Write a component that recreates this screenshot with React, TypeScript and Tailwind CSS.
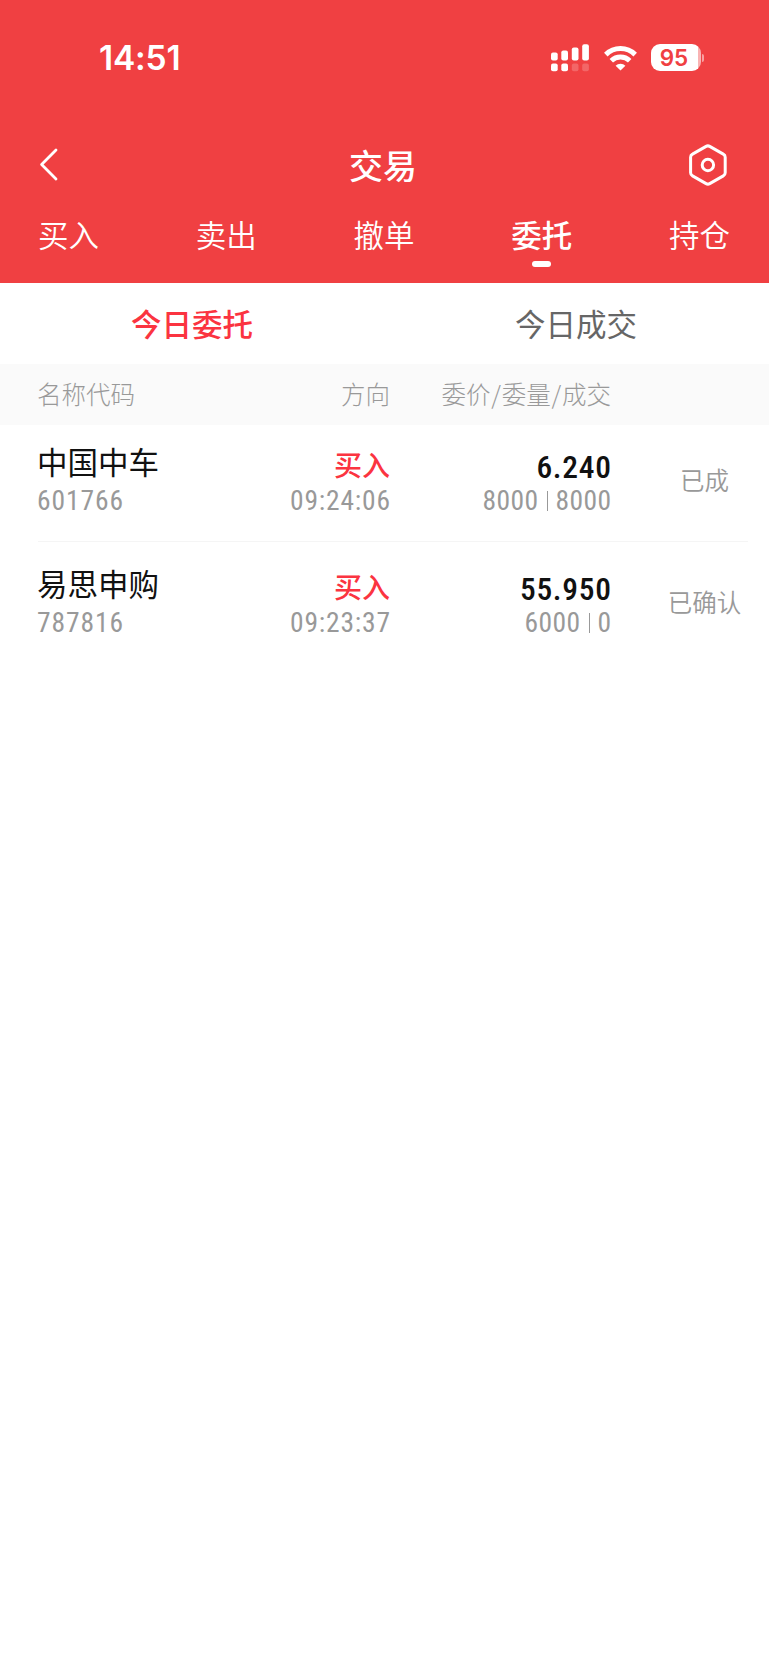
import { clsx } from 'clsx';

interface Order {
  name: string;
  code: string;
  side: string;
  time: string;
  price: string;
  amount: string;
  filled: string;
  status: string;
}

const TABS = ['买入', '卖出', '撤单', '委托', '持仓'];
const ACTIVE_TAB = '委托';

const ORDERS: Order[] = [
  {
    name: '中国中车',
    code: '601766',
    side: '买入',
    time: '09:24:06',
    price: '6.240',
    amount: '8000',
    filled: '8000',
    status: '已成',
  },
  {
    name: '易思申购',
    code: '787816',
    side: '买入',
    time: '09:23:37',
    price: '55.950',
    amount: '6000',
    filled: '0',
    status: '已确认',
  },
];

const COLUMNS = 'grid grid-cols-[175px_178px_221px_1fr] pl-[37px]';
const DIGITS =
  "font-['Roboto','Noto_Sans_CJK_SC',sans-serif] [font-stretch:87%]";

const StatusBar = () => (
  <div className="flex h-[115px] items-center justify-between pl-[99px] pr-[65px]">
    <span className="pt-[2px] font-['Inter',sans-serif] text-[33.5px] font-semibold leading-none tracking-[-0.2px] text-white">
      14:51
    </span>
    <div className="flex items-center">
      {/* Dual SIM signal */}
      <svg className="h-7 w-[38px]" viewBox="0 0 38 28" fill="#fff">
        <rect x="0" y="8.5" width="6.7" height="8" rx="2" />
        <rect x="10.3" y="6.5" width="6.7" height="10" rx="2" />
        <rect x="20.8" y="3.5" width="6.7" height="13" rx="2" />
        <rect x="31.2" y="0.3" width="6.7" height="16.2" rx="2" />
        <rect x="0" y="19.5" width="6.7" height="7.8" rx="2" />
        <rect x="10.3" y="19.5" width="6.7" height="7.8" rx="2" />
        <rect x="20.8" y="19.5" width="6.7" height="7.8" rx="2" opacity="0.2" />
        <rect x="31.2" y="19.5" width="6.7" height="7.8" rx="2" opacity="0.2" />
      </svg>
      {/* Wifi */}
      <svg
        className="ml-[15px] h-[26px] w-[33px]"
        viewBox="0 0 33 26"
        fill="none"
        stroke="#fff"
        strokeWidth="5"
      >
        <path d="M1.8 9.6a21 21 0 0 1 29.4 0" />
        <path d="M7.3 15.8a13.3 13.3 0 0 1 18.4 0" />
        <path
          d="M16.5 25.6l-4.9-4.900a6.900 6.900 0 0 1 9.800 0z"
          fill="#fff"
          stroke="none"
        />
      </svg>
      {/* Battery */}
      <div className="ml-[14px] flex h-[27px] w-[50px] items-center justify-center rounded-[9px] bg-[linear-gradient(to_right,#fff_47px,#f9b3b3_47px)] pr-[3px] pt-[1px]">
        <span className="font-['Inter',sans-serif] text-[22.5px] font-semibold leading-none text-[#f04042]">
          95
        </span>
      </div>
      <div className="ml-[1px] h-[8px] w-[2.5px] rounded-r-full bg-white/50" />
    </div>
  </div>
);

const Header = () => (
  <header className="h-[283px] bg-[#f04042] text-white">
    <StatusBar />
    <div className="flex h-[98px] items-center justify-between pl-[39px] pr-[42px]">
      <svg
        className="h-[34px] w-[38px]"
        viewBox="0 0 38 34"
        fill="none"
        stroke="#fff"
        strokeWidth="2.8"
        strokeLinecap="round"
        strokeLinejoin="round"
      >
        <path d="M17 3 2.6 17.5 17 32" />
      </svg>
      <h1 className="pt-[1px] text-[34px] font-medium leading-none">交易</h1>
      <svg
        className="mt-[2px] h-[42px] w-[38px]"
        viewBox="0 0 38 42"
        fill="none"
        stroke="#fff"
        strokeWidth="3"
        strokeLinejoin="round"
      >
        <path d="M16.2 2.4a3.6 3.6 0 0 1 3.6 0l13.600 7.700a3.600 3.600 0 0 1 1.900 3.200v15.400a3.600 3.600 0 0 1-1.900 3.200l-13.600 7.700a3.600 3.600 0 0 1-3.600 0L2.600 31.900a3.600 3.600 0 0 1-1.900-3.200V13.300a3.600 3.600 0 0 1 1.900-3.200z" transform="translate(.9 0)" />
        <circle cx="18.9" cy="21" r="5.700" />
      </svg>
    </div>
    <nav className="flex justify-between pl-[38px] pr-[39px]">
      {TABS.map((tab) => (
        <div key={tab} className="flex flex-col items-center">
          <span
            className={clsx(
              'text-[30.5px] leading-[42px]',
              tab === ACTIVE_TAB ? 'font-medium' : 'font-[350]',
            )}
          >
            {tab}
          </span>
          {tab === ACTIVE_TAB && (
            <span className="mt-1.5 h-1.5 w-[19px] rounded-[3px] bg-white" />
          )}
        </div>
      ))}
    </nav>
  </header>
);

const OrderRow = ({ order }: { order: Order }) => (
  <div className={clsx(COLUMNS, 'pt-[15px]')}>
    <div>
      <div className="text-[30.5px] leading-[42px] text-[#111]">
        {order.name}
      </div>
      <div
        className={clsx(
          DIGITS,
          'pt-[2px] text-[27.5px] font-[450] leading-[34px] tracking-[0.9px] text-[#999]',
        )}
      >
        {order.code}
      </div>
    </div>
    <div className="text-right">
      <div className="pt-[5px] text-[28px] font-medium leading-[39px] text-[#fb3440]">
        {order.side}
      </div>
      <div
        className={clsx(
          DIGITS,
          '-mr-[0.8px] text-[27.5px] font-[450] leading-[34px] tracking-[0.8px] text-[#999]',
        )}
      >
        {order.time}
      </div>
    </div>
    <div className={clsx(DIGITS, 'text-right')}>
      <div className="-mr-[0.7px] pt-[12px] text-[31.5px] font-medium leading-[32px] tracking-[0.7px] text-[#111]">
        {order.price}
      </div>
      <div className="-mr-[0.4px] flex items-center justify-end text-[27.5px] font-[450] leading-[34px] tracking-[0.4px] text-[#999]">
        {order.amount}
        <span className="ml-[9px] mr-[7px] h-[20px] w-px bg-[#999]" />
        {order.filled}
      </div>
    </div>
    <div className="pl-[29px] pt-[22px] text-center text-[24.5px] font-[350] leading-[36px] text-[#999]">
      {order.status}
    </div>
  </div>
);

export default function App() {
  return (
    <div className="min-h-[1665px] bg-white font-['Noto_Sans_CJK_SC',sans-serif]">
      <Header />

      {/* Sub tabs */}
      <div className="grid h-[81px] grid-cols-2 items-center pr-[1px] text-center text-[30.5px] leading-none">
        <span className="font-medium text-[#fb3440]">今日委托</span>
        <span className="text-[#666]">今日成交</span>
      </div>

      {/* Column titles */}
      <div
        className={clsx(
          COLUMNS,
          'h-[61px] items-center bg-[#fafafa] text-[24.5px] font-light leading-none text-[#999]',
        )}
      >
        <span>名称代码</span>
        <span className="text-right">方向</span>
        <span className="text-right">
          委价<span className="px-[0.8px]">/</span>委量
          <span className="px-[0.8px]">/</span>成交
        </span>
      </div>

      <div className="h-[116px]">
        <OrderRow order={ORDERS[0]} />
      </div>
      <div className="mb-[5px] ml-[38px] mr-[21px] h-px bg-[#f5f5f5]" />
      <OrderRow order={ORDERS[1]} />
    </div>
  );
}
